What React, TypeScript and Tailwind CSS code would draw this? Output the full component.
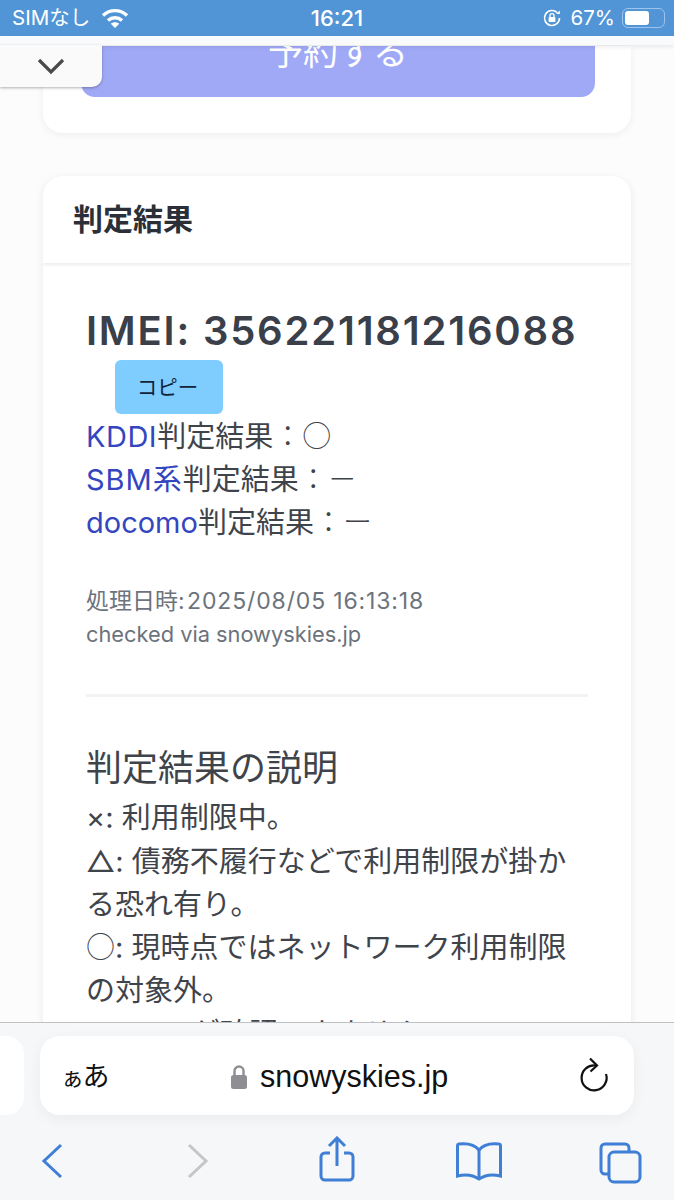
import React from 'react';

const JP = 'font-["Inter","Noto_Sans_CJK_JP",sans-serif]';
const CJK = 'font-["Noto_Sans_CJK_JP",sans-serif] font-light leading-[0]';

const Rule = () => <div className="mt-[43px] h-[3px] bg-[#f1f3f5]" />;

const App: React.FC = () => {
  return (
    <div className={`relative h-[1200px] w-[674px] overflow-hidden bg-[#fcfcfc] ${JP}`}>
      {/* page */}
      <div className="flex h-[1022px] flex-col overflow-hidden px-[43px]">
        <div className="h-[46px] shrink-0" />
        <div className="h-[87px] shrink-0 rounded-b-[20px] bg-white pl-[38px] pr-[36px] shadow-[0_2px_8px_rgba(0,0,0,0.06)]">
          <div className="relative h-[51px] overflow-hidden rounded-b-[14px] bg-[#a0a9f6]">
            <div className="absolute inset-x-0 top-[-14px] text-center text-[35px] leading-[40px] text-white">予約する</div>
          </div>
        </div>
        <div className="mt-[43px] shrink-0 overflow-hidden rounded-t-[20px] bg-white shadow-[0_2px_8px_rgba(0,0,0,0.08)]">
          <div className="flex h-[87px] items-center bg-white px-[30px] text-[30px] font-semibold text-[#2b3038] shadow-[0_2px_3px_rgba(0,0,0,0.08)]">
            判定結果
          </div>
          <div className="h-[800px] px-[43px] pt-[44px] text-[29px] leading-[43px] text-[#3f444b]">
            <div className="whitespace-nowrap text-[40px] font-semibold leading-[48px] tracking-[1.8px] text-[#3a3f4a]">IMEI: 356221181216088</div>
            <button className="ml-[29px] mt-[5px] block h-[54px] w-[108px] rounded-[6px] bg-[#7fccff] pr-[3px] text-[20.5px] text-[#12233a]">コピー</button>
            <div className="mt-[1px]"><span className="tracking-[0.5px] text-[#3445c0]">KDDI</span>判定結果<span className={CJK}>：○</span></div>
            <div><span className="tracking-[1px] text-[#3445c0]">SBM系</span>判定結果<span className={CJK}>：－</span></div>
            <div><span className="text-[#3445c0]">docomo</span>判定結果<span className={CJK}>：ー</span></div>
            <div className="mt-[41px] text-[23px] leading-[33px] text-[#6c737c]">
              <div>処理日時<span className="tracking-[-2px]">: </span><span className="tracking-[0.85px]">2025/08/05 16:13:18</span></div>
              <div className="text-[21.8px]">checked via snowyskies.jp</div>
            </div>
            <Rule />
            <div className="mt-[47px] text-[36px] leading-[48px] text-[#3f444b]">判定結果の説明</div>
            <div className="mt-[4px]">×: 利用制限中。</div>
            <div className="mt-[1px]">△: 債務不履行などで利用制限が掛かる恐れ有り。</div>
            <div><span className={CJK}>○</span>: 現時点ではネットワーク利用制限の対象外。</div>
            <div>－: IMEIが確認できません。</div>
          </div>
        </div>
      </div>

      {/* status bar, over the page */}
      <div className="absolute inset-x-0 top-0 flex h-[36px] items-center justify-between bg-[#5295d6] pl-[12px] pr-[9px] text-[20.5px] text-white">
        <div className="flex items-center gap-[10px]">
          <span>SIMなし</span>
          <svg width="30" height="22" viewBox="0 0 30 22" fill="none" stroke="white" strokeWidth="3.4">
            <path d="M3 8.5c7-6.500 17-6.500 24 0" />
            <path d="M8 13.500c4-3.600 10-3.600 14 0" />
            <path d="M15 21l-4.200-4.300c2.400-2 6-2 8.400 0z" fill="white" stroke="none" />
          </svg>
        </div>
        <span className="absolute left-1/2 -translate-x-1/2 text-[22px] font-medium">16:21</span>
        <div className="flex items-center gap-[6px]">
          <svg className="mr-[3px]" width="20" height="20" viewBox="0 0 20 20" fill="none" stroke="white" strokeWidth="1.6">
            <path d="M17.500 10a7.500 7.500 0 1 1-2.200-5.300" />
            <path d="M17.800 2.500v3.600h-3.600" fill="white" stroke="none" />
            <rect x="6.600" y="9" width="6.800" height="5" rx="1" fill="white" stroke="none" />
            <path d="M8 9V7.600a2 2 0 0 1 4 0V9" strokeWidth="1.300" />
          </svg>
          <span>67%</span>
          <div className="ml-[1px] flex h-[20px] w-[43px] items-center rounded-[6px] border-[1.5px] border-[#9cc4ec] p-[2px]">
            <div className="h-full w-[65%] rounded-[3px] bg-white" />
          </div>
        </div>
      </div>
      <div className="absolute inset-x-0 top-[36px] h-[9px] bg-[#f9fafb] shadow-[0_2px_4px_rgba(0,0,0,0.08)]" />

      {/* collapse tab */}
      <div className="absolute left-0 top-[45px] flex h-[42px] w-[102px] items-center justify-center rounded-br-[10px] bg-[#fafafa] shadow-[0_1px_3px_rgba(0,0,0,0.3)]">
        <svg width="28" height="18" viewBox="0 0 28 18" fill="none" stroke="#4a4a4a" strokeWidth="3.2">
          <path d="M2 3l12 12L26 3" />
        </svg>
      </div>

      {/* safari toolbar */}
      <div className="absolute inset-x-0 bottom-0 h-[178px] border-t border-[#bfc1c4] bg-[#f5f7f9]">
        <div className="absolute left-[-40px] top-[13px] h-[79px] w-[64px] rounded-[18px] bg-white" />
        <div className="absolute left-[40px] top-[13px] flex h-[79px] w-[594px] items-center rounded-[20px] bg-white px-[23px] shadow-[0_4px_14px_rgba(0,0,0,0.05)]">
          <span className="-ml-[2px] pt-[3px] text-[27px] tracking-[-1.5px] text-[#111]"><span className="text-[23px]">ぁ</span>あ</span>
          <div className="ml-[123px] flex items-center gap-[12px] pt-[2px]">
            <svg className="-ml-[1px]" width="18" height="26" viewBox="0 0 18 26" fill="none">
              <path d="M4.500 12V7a4.500 4.500 0 0 1 9 0v5" stroke="#8e8e93" strokeWidth="2.400" />
              <rect x="1" y="11" width="16" height="14" rx="2.500" fill="#8e8e93" />
            </svg>
            <span className="font-['Liberation_Sans',sans-serif] text-[30.5px] text-[#111]">snowyskies.jp</span>
          </div>
          <svg className="absolute right-[25px] top-[21px]" width="30" height="36" viewBox="0 0 30 36" fill="none" stroke="#111" strokeWidth="2.2">
            <path d="M17 8.500A12.500 12.500 0 1 0 27 17" />
            <path d="M11 1.500l7 7-6.500 6" />
          </svg>
        </div>
        <svg className="absolute left-[40px] top-[120px]" width="24" height="36" viewBox="0 0 24 36" fill="none" stroke="#3f7fd6" strokeWidth="3">
          <path d="M21 2L4 18l17 16" />
        </svg>
        <svg className="absolute left-[186px] top-[120px]" width="24" height="36" viewBox="0 0 24 36" fill="none" stroke="#c4c6c9" strokeWidth="3">
          <path d="M3 2l17 16L3 34" />
        </svg>
        <svg className="absolute left-[318px] top-[113px]" width="38" height="46" viewBox="0 0 38 46" fill="none" stroke="#3f7fd6" strokeWidth="3">
          <path d="M12 17H7a4 4 0 0 0-4 4v19a4 4 0 0 0 4 4h24a4 4 0 0 0 4-4V21a4 4 0 0 0-4-4h-5" />
          <path d="M19 30V3M11 10l8-8 8 8" />
        </svg>
        <svg className="absolute left-[456px] top-[118px]" width="46" height="40" viewBox="0 0 46 40" fill="none" stroke="#3f7fd6" strokeWidth="3">
          <path d="M23 9C19 4 12 2 3 3c-1 0-1.500 1-1.500 2v30c6-1.500 15-1.500 21.500 3 6.500-4.500 15.500-4.500 21.500-3V5c0-1-.5-2-1.500-2-9-1-16 1-20 6z" />
          <path d="M23 9v29" />
        </svg>
        <svg className="absolute left-[599px] top-[119px]" width="44" height="42" viewBox="0 0 44 42" fill="none" stroke="#3f7fd6" strokeWidth="3">
          <path d="M9 32H6a4 4 0 0 1-4-4V6a4 4 0 0 1 4-4h20a4 4 0 0 1 4 4v3" />
          <rect x="10" y="10" width="31" height="30" rx="5" />
        </svg>
      </div>
    </div>
  );
};

export default App;
